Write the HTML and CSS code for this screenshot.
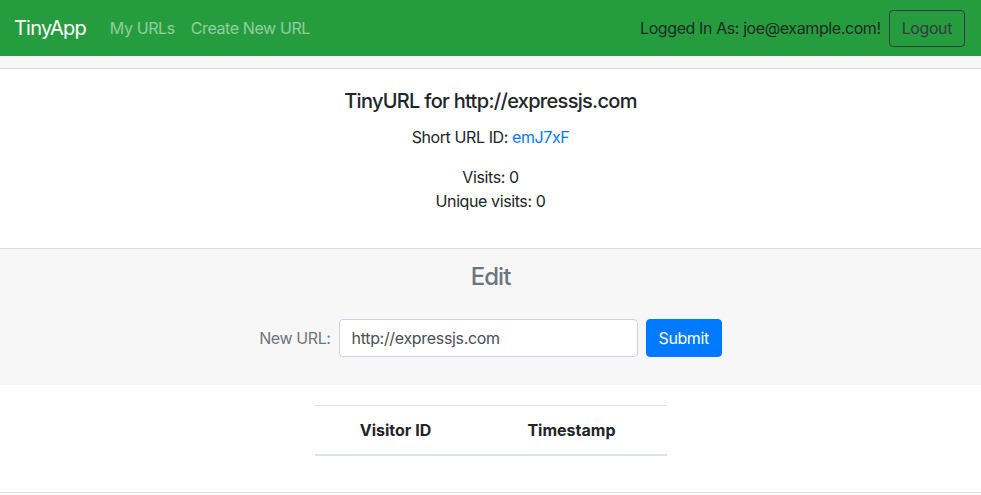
FILE: index.html
```html
<!DOCTYPE html>
<html lang="en">
<head>
<meta charset="utf-8">
<title>TinyApp</title>
<link rel="stylesheet" href="styles.css">
</head>
<body>
<nav class="navbar">
  <a class="brand" href="#">TinyApp</a>
  <ul class="nav-links">
    <li><a class="nav-link" href="#">My URLs</a></li>
    <li><a class="nav-link" href="#">Create New URL</a></li>
  </ul>
  <div class="nav-right">
    <span class="nav-text">Logged In As: joe@example.com!</span>
    <button class="btn-outline" type="button">Logout</button>
  </div>
</nav>
<main class="card">
  <div class="card-header"></div>
  <div class="card-body">
    <h5 class="card-title">TinyURL for http://expressjs.com</h5>
    <p class="card-text">Short URL ID: <a class="link" href="#">emJ7xF</a></p>
    <p class="card-text">Visits: 0<br>Unique visits: 0</p>
  </div>
  <div class="card-footer">
    <h4 class="edit-title">Edit</h4>
    <form class="edit-form">
      <label class="form-label" for="longURL">New URL:</label>
      <input class="form-control" id="longURL" type="text" value="http://expressjs.com">
      <button class="btn-primary" type="submit">Submit</button>
    </form>
  </div>
  <div class="visits">
    <table class="table">
      <thead>
        <tr><th>Visitor ID</th><th>Timestamp</th></tr>
      </thead>
      <tbody></tbody>
    </table>
  </div>
</main>
</body>
</html>
```
FILE: styles.css
```css
* { box-sizing: border-box; }
html, body { margin: 0; padding: 0; }
body {
  font-family: Inter, "Noto Sans", "Liberation Sans", sans-serif;
  font-size: 16px;
  line-height: 1.5;
  letter-spacing: -0.025em;
  color: #212529;
  background: #fff;
}
a { text-decoration: none; }

.navbar {
  display: flex;
  align-items: center;
  height: 56px;
  padding: 8px 16px;
  background: #259d3f;
}
.brand {
  font-size: 20px;
  line-height: 30px;
  letter-spacing: -0.04em;
  color: #fff;
  margin-right: 16px;
  margin-left: -2px;
}
.nav-links {
  display: flex;
  list-style: none;
  margin: 0;
  padding: 0;
}
.nav-link {
  display: block;
  padding: 8px;
  color: rgba(255, 255, 255, 0.5);
}
.nav-right {
  margin-left: auto;
  display: flex;
  align-items: center;
  gap: 8px;
}
.nav-text { color: #1e2a22; }
.btn-outline {
  font: inherit;
  letter-spacing: inherit;
  color: #343a40;
  background: transparent;
  border: 1px solid #343a40;
  border-radius: 4px;
  padding: 5px 12px;
  line-height: 24px;
  height: 37px;
}

.card { text-align: center; }
.card-header {
  height: 13px;
  background: #f7f7f7;
  border-bottom: 1px solid #dcdcdc;
}
.card-body { padding: 20px 20px 19px; }
.card-title {
  font-size: 20px;
  font-weight: 500;
  line-height: 24px;
  letter-spacing: -0.035em;
  margin: 0 0 12px;
}
.card-text { margin: 0 0 16px; }
.link { color: #007bff; }

.card-footer {
  background: #f7f7f7;
  border-top: 1px solid #dcdcdc;
  padding: 12px 20px 28px;
}
.edit-title {
  font-size: 24px;
  font-weight: 500;
  line-height: 29px;
  letter-spacing: -0.04em;
  color: #6c757d;
  margin: 1px 0 28px;
}
.edit-form {
  display: flex;
  justify-content: center;
  align-items: center;
  gap: 8px;
}
.form-label { color: #6c757d; }
.form-control {
  font: inherit;
  letter-spacing: -0.02em;
  color: #495057;
  width: 299px;
  height: 38px;
  padding: 6px 12px;
  background: #fff;
  border: 1px solid #ced4da;
  border-radius: 4px;
}
.btn-primary {
  font: inherit;
  letter-spacing: inherit;
  color: #fff;
  background: #007bff;
  border: 1px solid #007bff;
  border-radius: 4px;
  height: 38px;
  padding: 6px 12px;
  line-height: 24px;
}

.visits {
  padding: 20px 0 36px;
  border-bottom: 1px solid #dcdcdc;
}
.table {
  width: 352px;
  margin: 0 auto;
  border-collapse: collapse;
}
.table th {
  padding: 12px;
  font-weight: 700;
  line-height: 24px;
  letter-spacing: 0;
  border-top: 1px solid #dee2e6;
  border-bottom: 2px solid #dee2e6;
}
```
